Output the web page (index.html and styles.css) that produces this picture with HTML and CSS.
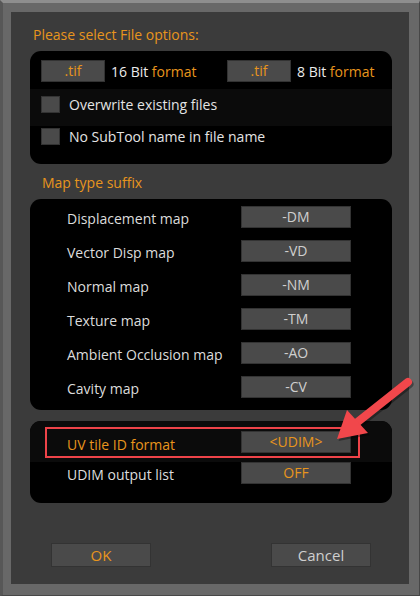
FILE: index.html
```html
<!DOCTYPE html>
<html lang="en">
    <head>
        <meta charset="UTF-8">
        <meta name="viewport" content="width=device-width, initial-scale=1.0">
        <title>Export Options</title>
        <link rel="stylesheet" href="styles.css">
    </head>
    <body>
        <div class="window">
            <div class="dialog">
                <h2 class="title">Please select File options:</h2>
                <div class="panel files">
                    <div class="format-row">
                        <span class="btn orange">.tif</span>
                        <span class="fmt">16 Bit <em>format</em></span>
                        <span class="btn orange">.tif</span>
                        <span class="fmt">8 Bit <em>format</em></span>
                    </div>
                    <div class="check-row band">
                        <span class="box"></span>
                        <span>Overwrite existing files</span>
                    </div>
                    <div class="check-row last">
                        <span class="box"></span>
                        <span>No SubTool name in file name</span>
                    </div>
                </div>

                <h2 class="title sub">Map type suffix</h2>
                <div class="panel maps">
                    <div class="map-row"><span class="label">Displacement map</span><span class="btn">-DM</span></div>
                    <div class="map-row"><span class="label">Vector Disp map</span><span class="btn">-VD</span></div>
                    <div class="map-row"><span class="label">Normal map</span><span class="btn">-NM</span></div>
                    <div class="map-row"><span class="label">Texture map</span><span class="btn">-TM</span></div>
                    <div class="map-row"><span class="label">Ambient Occlusion map</span><span class="btn">-AO</span></div>
                    <div class="map-row"><span class="label">Cavity map</span><span class="btn">-CV</span></div>
                </div>

                <div class="panel udim">
                    <div class="udim-row band top">
                        <span class="label orange">UV tile ID format</span><span class="btn orange">&lt;UDIM&gt;</span>
                        <div class="highlight"></div>
                    </div>
                    <div class="udim-row">
                        <span class="label">UDIM output list</span><span class="btn orange">OFF</span>
                    </div>
                </div>

                <div class="actions">
                    <span class="btn big orange">OK</span>
                    <span class="btn big">Cancel</span>
                </div>
            </div>

            <svg class="arrow" width="100" height="90" viewBox="0 0 100 90">
                <g transform="translate(1.5,2)" fill="#000" opacity="0.35">
                    <line x1="88" y1="12" x2="30" y2="58" stroke="#000" stroke-width="8" stroke-linecap="round"/>
                    <polygon points="17,69 27,40 48,63"/>
                </g>
                <line x1="88" y1="12" x2="30" y2="58" stroke="#f1474b" stroke-width="8" stroke-linecap="round"/>
                <polygon points="17,69 27,40 48,63" fill="#f1474b"/>
            </svg>
        </div>
    </body>
</html>
```

FILE: styles.css
```css
* {
    box-sizing: border-box;
}

body {
    margin: 0;
    background-color: #676767;
    font-family: "Open Sans", "Liberation Sans", sans-serif;
    font-size: 14px;
    color: #dcdcdc;
}

.window {
    position: relative;
    width: 420px;
    height: 596px;
    background-color: #686868;
    border-top: 3px solid #8e8e8e;
    border-left: 3px solid #575757;
    border-right: 1px solid #474747;
    border-bottom: 1px solid #474747;
    padding: 9px 0 0 8px;
}

.dialog {
    width: 398px;
    height: 572px;
    background-color: #3b3b3b;
    padding-top: 14px;
}

.title {
    margin: 0 0 0 22px;
    font-size: 14px;
    font-weight: normal;
    line-height: 17px;
    color: #e8951d;
}

.title.sub {
    margin: 10px 0 0 31px;
}

.orange,
em {
    color: #e8951d;
    font-style: normal;
}

.panel {
    width: 362px;
    margin-left: 19px;
    background-color: #000;
    border-radius: 11px;
    overflow: hidden;
}

.btn {
    display: flex;
    flex-shrink: 0;
    align-items: center;
    justify-content: center;
    height: 22px;
    background-color: #4a4a4a;
    border: 1px solid #333;
    color: #cfcfcf;
    line-height: 1;
}

.btn.orange {
    color: #e8951d;
}

/* file options */

.files {
    margin-top: 8px;
    height: 113px;
    padding-top: 9px;
}

.format-row {
    display: flex;
    align-items: center;
    padding-left: 11px;
}

.format-row .btn {
    width: 64px;
}

.fmt {
    color: #ececec;
    margin-left: 6px;
    width: 116px;
    flex-shrink: 0;
    white-space: nowrap;
}

.check-row {
    display: flex;
    align-items: flex-start;
    gap: 9px;
    padding-left: 11px;
    color: #e4e4e4;
    line-height: 17px;
}

.band {
    background-color: #0b0b0b;
}

.check-row.band {
    margin-top: 7px;
    height: 37px;
    padding-top: 7px;
}

.check-row.last {
    padding-top: 2px;
}

.box {
    width: 19px;
    height: 17px;
    background-color: #4a4a4a;
    border: 1px solid #333;
}

/* map suffix */

.maps {
    margin-top: 8px;
    padding: 7px 0 12px 0;
    display: flex;
    flex-direction: column;
    gap: 12px;
}

.map-row,
.udim-row {
    display: flex;
    align-items: center;
    padding-left: 37px;
    height: 22px;
}

.label {
    width: 174px;
    color: #dcdcdc;
    padding-top: 3px;
    white-space: nowrap;
}

.label.orange {
    color: #e8951d;
}

.map-row .btn,
.udim-row .btn {
    width: 110px;
}

/* udim */

.udim {
    margin-top: 11px;
    height: 82px;
}

.udim-row.top {
    position: relative;
    height: 41px;
    padding-top: 10px;
    align-items: flex-start;
}

.udim-row.top .label {
    padding-top: 4px;
}

.highlight {
    position: absolute;
    left: 15px;
    top: 6px;
    width: 315px;
    height: 31px;
    border: 2px solid #ee4349;
}

/* buttons */

.actions {
    display: flex;
    justify-content: space-between;
    padding: 0 38px 0 40px;
    margin-top: 40px;
}

.btn.big {
    width: 100px;
    height: 24px;
    font-size: 15px;
}

.btn.big:last-child {
    color: #cfcfcf;
}

.arrow {
    position: absolute;
    left: 317px;
    top: 367px;
}
```
